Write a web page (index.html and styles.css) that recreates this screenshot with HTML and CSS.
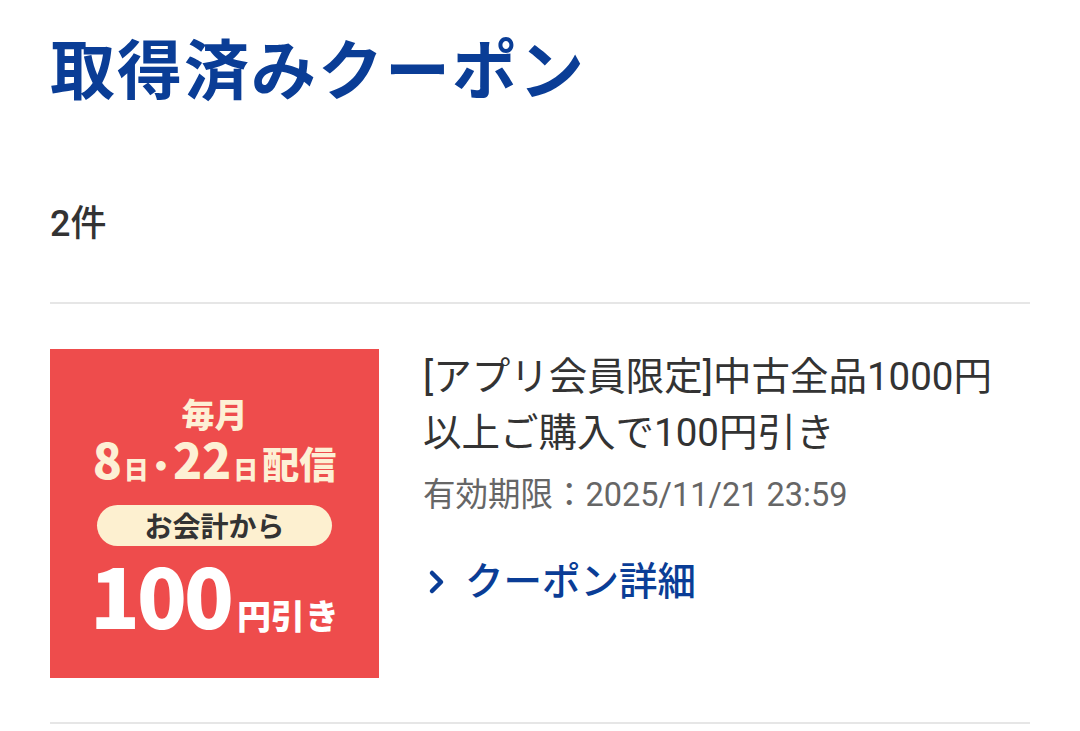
FILE: index.html
```html
<!DOCTYPE html>
<html lang="ja">
<head>
    <meta charset="UTF-8">
    <meta name="viewport" content="width=device-width, initial-scale=1.0">
    <title>取得済みクーポン</title>
    <link rel="stylesheet" href="styles.css">
</head>
<body>
    <div class="page">
        <h1 class="page-title">取得済みクーポン</h1>
        <p class="count">2件</p>
        <ul class="coupon-list">
            <li class="coupon">
                <div class="coupon-thumb">
                    <p class="thumb-month">毎月</p>
                    <p class="thumb-days"><span class="num">8</span><span class="small">日</span><span class="dot">・</span><span class="num">22</span><span class="small">日</span><span class="mid">配信</span></p>
                    <p class="thumb-pill">お会計から</p>
                    <p class="thumb-price"><span class="big">100</span><span class="unit">円引き</span></p>
                </div>
                <div class="coupon-body">
                    <h2 class="coupon-name">[アプリ会員限定]中古全品1000円以上ご購入で100円引き</h2>
                    <p class="coupon-limit">有効期限：2025/11/21 23:59</p>
                    <a class="coupon-link" href="#">
                        <svg width="18" height="26" viewBox="0 0 18 26"><path d="M4 4 L13 13 L4 22" fill="none" stroke="#0a3d96" stroke-width="4.5" stroke-linecap="round" stroke-linejoin="round"/></svg>
                        クーポン詳細
                    </a>
                </div>
            </li>
        </ul>
    </div>
</body>
</html>
```

FILE: styles.css
```css
html,
body {
    margin: 0;
    padding: 0;
    background: #fff;
    font-family: Roboto, "Noto Sans CJK JP", sans-serif;
    color: #333;
}

.page {
    padding: 0 50px;
}

.page-title {
    margin: 0;
    padding-top: 26px;
    font-family: "Noto Sans CJK JP", sans-serif;
    font-size: 65px;
    line-height: 80px;
    font-weight: 700;
    color: #0a3d96;
    letter-spacing: 2px;
}

.count {
    margin: 0;
    padding-top: 94px;
    font-size: 36px;
    line-height: 48px;
    font-weight: 500;
    color: #333;
}

.coupon-list {
    list-style: none;
    margin: 54px 0 0;
    padding: 0;
    border-top: 2px solid #e6e6e6;
}

.coupon {
    display: flex;
    gap: 44px;
    padding: 45px 0 44px;
    border-bottom: 2px solid #e6e6e6;
}

/* 画像の代わりに描いたバナー */
.coupon-thumb {
    flex: 0 0 329px;
    height: 329px;
    background: #ee4c4c;
    color: #fdf0d5;
    display: flex;
    flex-direction: column;
    align-items: center;
    font-family: "Noto Sans CJK JP", sans-serif;
    font-weight: 900;
    box-sizing: border-box;
    padding-top: 44px;
}

.coupon-thumb p {
    margin: 0;
}

.thumb-month {
    font-size: 33px;
    line-height: 40px;
}

.thumb-days {
    margin-top: 0 !important;
    line-height: 50px;
    display: flex;
    align-items: baseline;
}

.thumb-days .num {
    font-size: 48px;
}

.thumb-days .small {
    font-size: 25px;
    margin-left: 2px;
}

.thumb-days .dot {
    font-size: 34px;
    margin: 0 -5px;
}

.thumb-days .mid {
    font-size: 37px;
    margin-left: 4px;
}

.thumb-pill {
    margin-top: 12px !important;
    width: 235px;
    height: 41px;
    border-radius: 21px;
    background: #fdf0d0;
    color: #333;
    font-size: 28px;
    line-height: 41px;
    text-align: center;
    font-weight: 700;
}

.thumb-price {
    margin-top: 6px !important;
    color: #fff;
    line-height: 84px;
    display: flex;
    align-items: baseline;
}

.thumb-price .big {
    font-size: 82px;
    letter-spacing: -3px;
}

.thumb-price .unit {
    font-size: 34px;
    margin-left: 6px;
}

.coupon-body {
    flex: 1;
    min-width: 0;
}

.coupon-name {
    margin: 0;
    width: 590px;
    font-size: 38.5px;
    line-height: 56px;
    font-weight: 400;
    color: #333;
}

.coupon-limit {
    margin: 12px 0 0;
    font-size: 32.5px;
    line-height: 44px;
    color: #666;
}

.coupon-link {
    display: inline-flex;
    align-items: center;
    gap: 19px;
    margin-top: 40px;
    font-size: 38.5px;
    line-height: 50px;
    font-weight: 500;
    color: #0a3d96;
    text-decoration: none;
    padding-left: 5px;
}
```
